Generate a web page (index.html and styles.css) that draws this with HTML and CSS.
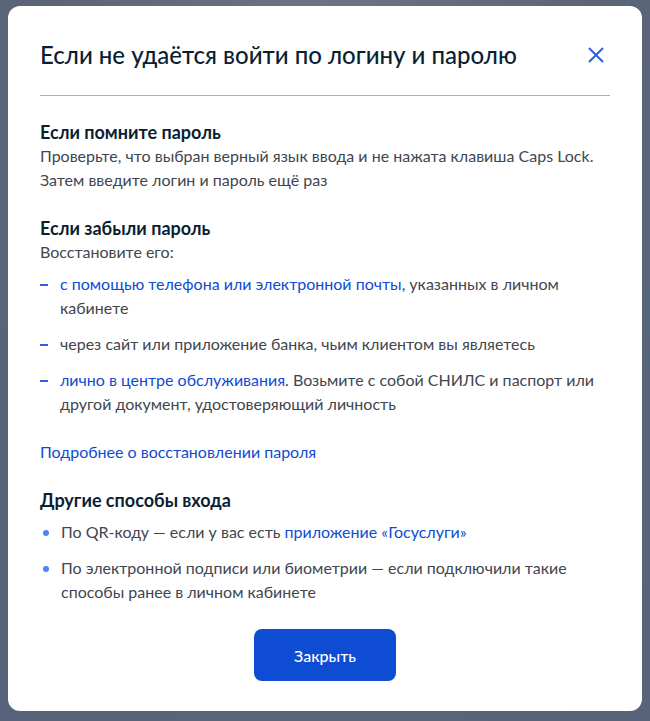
FILE: index.html
```html
<!DOCTYPE html>
<html lang="ru">
<head>
<meta charset="utf-8">
<title>Если не удаётся войти</title>
<link rel="stylesheet" href="styles.css">
</head>
<body>
<div class="modal">
  <div class="header">
    <h1 class="title">Если не удаётся войти по логину и паролю</h1>
    <button class="close" aria-label="Закрыть">
      <svg width="16" height="16" viewBox="0 0 16 16"><path d="M1 1L15 15M15 1L1 15" stroke="#2b62e0" stroke-width="2" fill="none"/></svg>
    </button>
  </div>
  <div class="divider"></div>

  <section class="sec">
    <h2 class="subtitle">Если помните пароль</h2>
    <p class="text">Проверьте, что выбран верный язык ввода и не нажата клавиша Caps Lock. Затем введите логин и пароль ещё раз</p>
  </section>

  <section class="sec">
    <h2 class="subtitle">Если забыли пароль</h2>
    <p class="text">Восстановите его:</p>
    <ul class="dash-list">
      <li><a class="link" href="#">с помощью телефона или электронной почты</a>, указанных в личном кабинете</li>
      <li>через сайт или приложение банка, чьим клиентом вы являетесь</li>
      <li><a class="link" href="#">лично в центре обслуживания</a>. Возьмите с собой СНИЛС и паспорт или другой документ, удостоверяющий личность</li>
    </ul>
  </section>

  <p class="more"><a class="link" href="#">Подробнее о восстановлении пароля</a></p>

  <section class="sec">
    <h2 class="subtitle">Другие способы входа</h2>
    <ul class="dot-list">
      <li>По QR-коду — если у вас есть <a class="link" href="#">приложение «Госуслуги»</a></li>
      <li>По электронной подписи или биометрии — если подключили такие способы ранее в личном кабинете</li>
    </ul>
  </section>

  <div class="actions">
    <button class="btn">Закрыть</button>
  </div>
</div>
</body>
</html>
```
FILE: styles.css
```css
* { box-sizing: border-box; }
html, body { margin: 0; padding: 0; }
body {
  background: radial-gradient(ellipse at 50% 0%, #6b7482 0%, #5a6578 60%, #56637a 100%);
  min-height: 721px;
  font-family: Lato, "Noto Sans", sans-serif;
  color: #0b1f33;
  padding: 6px 8px 10px 8px;
}
.modal {
  background: #fff;
  border-radius: 12px;
  width: 634px;
  height: 705px;
  padding: 33px 32px 30px 32px;
  display: flex;
  flex-direction: column;
}
.header {
  display: flex;
  align-items: center;
  justify-content: space-between;
}
.title {
  margin: 0;
  font-size: 24px;
  line-height: 32px;
  font-weight: 500;
  color: #0b1f33;
}
.close {
  border: 0;
  background: none;
  padding: 0;
  margin-right: 6px;
  width: 16px;
  height: 16px;
  display: flex;
  cursor: pointer;
}
.divider {
  height: 1px;
  background: #8fb0ec;
  margin: 24px 0 24px 0;
}
.sec { margin-bottom: 24px; }
.subtitle {
  margin: 0;
  font-size: 18px;
  line-height: 24px;
  font-weight: 700;
  color: #0b1f33;
}
.text {
  margin: 0;
  font-size: 16px;
  line-height: 24px;
  color: #3f4650;
}
.link { color: #0d4cd3; text-decoration: none; }
.dash-list, .dot-list {
  list-style: none;
  margin: 8px 0 0 0;
  padding: 0;
  display: flex;
  flex-direction: column;
  gap: 12px;
  font-size: 16px;
  line-height: 24px;
  color: #3f4650;
}
.dash-list li, .dot-list li {
  position: relative;
  padding-left: 20px;
}
.dash-list li::before {
  content: "";
  position: absolute;
  left: 0;
  top: 12px;
  width: 8px;
  height: 2px;
  background: #2b62e0;
}
.dot-list li::before {
  content: "";
  position: absolute;
  left: 3px;
  top: 10px;
  width: 6px;
  height: 6px;
  border-radius: 50%;
  background: #4c84f2;
}
.dot-list li { padding-left: 21px; }
.more {
  margin: 0 0 24px 0;
  font-size: 16px;
  line-height: 24px;
}
.actions {
  display: flex;
  justify-content: center;
  margin-top: auto;
}
.btn {
  width: 142px;
  height: 52px;
  border: 0;
  border-radius: 8px;
  background: #0d4cd3;
  color: #fff;
  font-family: Lato, "Noto Sans", sans-serif;
  font-size: 16px;
  font-weight: 500;
  cursor: pointer;
}
```
